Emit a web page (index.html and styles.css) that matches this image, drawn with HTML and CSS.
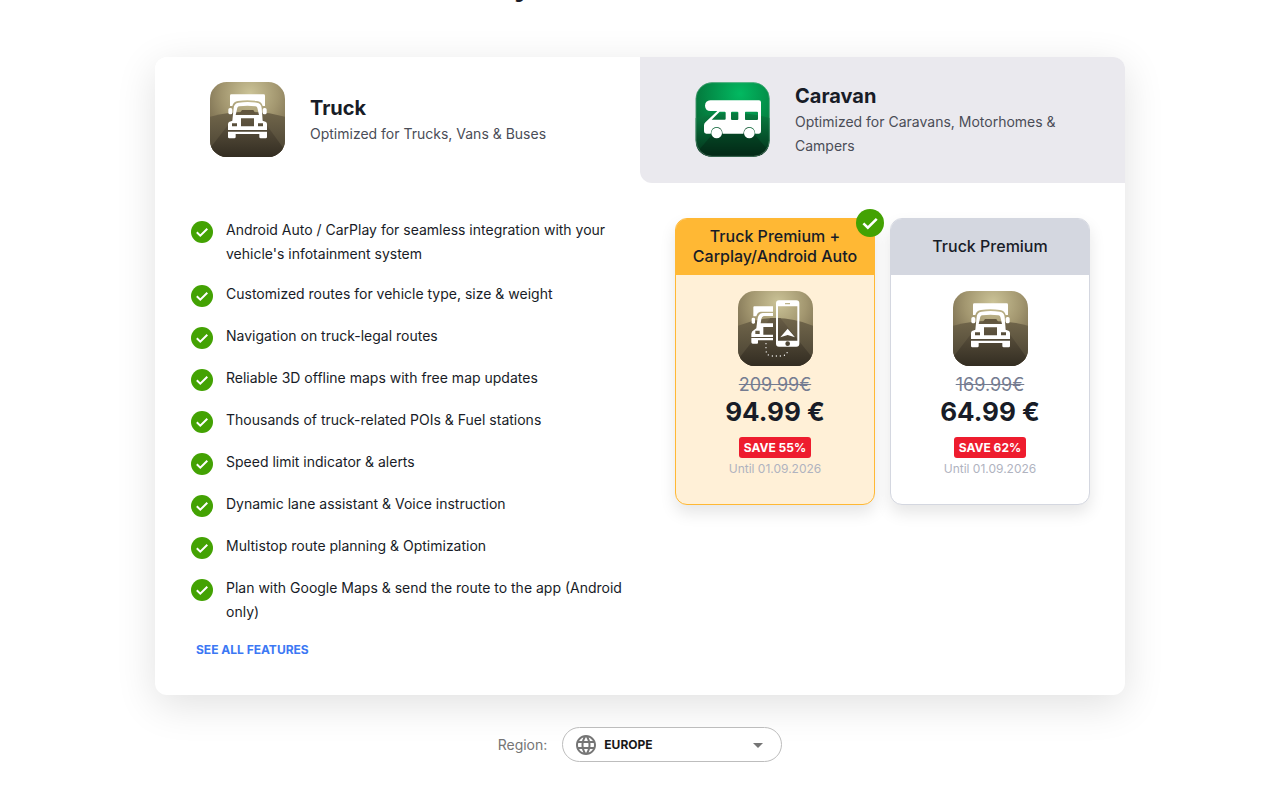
FILE: index.html
```
<!DOCTYPE html>
<html lang="en">
<head>
    <meta charset="UTF-8">
    <meta name="viewport" content="width=device-width, initial-scale=1">
    <title>Truck &amp; Caravan licenses</title>
    <link rel="stylesheet" href="styles.css">
</head>
<body>

    <!-- shared icons -->
    <svg class="sprite" aria-hidden="true">
        <defs>
            <radialGradient id="gold" gradientUnits="userSpaceOnUse" cx="150" cy="65" r="190">
                <stop offset="0" stop-color="#cbc397"/>
                <stop offset="0.45" stop-color="#a2966f"/>
                <stop offset="1" stop-color="#5f523b"/>
            </radialGradient>
            <linearGradient id="goldGround" x1="0" y1="0" x2="0" y2="1">
                <stop offset="0" stop-color="#71664b"/>
                <stop offset="1" stop-color="#474031"/>
            </linearGradient>
            <linearGradient id="goldRoad" x1="0" y1="0" x2="0" y2="1">
                <stop offset="0" stop-color="#675c45"/>
                <stop offset="1" stop-color="#332d22"/>
            </linearGradient>
            <radialGradient id="green" gradientUnits="userSpaceOnUse" cx="165" cy="65" r="150">
                <stop offset="0" stop-color="#02b961"/>
                <stop offset="1" stop-color="#047138"/>
            </radialGradient>
            <linearGradient id="greenGround" x1="0" y1="0" x2="0" y2="1">
                <stop offset="0" stop-color="#087e41"/>
                <stop offset="1" stop-color="#03301a"/>
            </linearGradient>
            <clipPath id="tile">
                <rect x="30" y="30" width="225" height="225" rx="50"/>
            </clipPath>
        </defs>
        <symbol id="check" viewBox="0 0 22 22">
            <circle cx="11" cy="11" r="11" fill="#43a203"/>
            <path d="M5.8 11.3l3.5 3.4 7-7" fill="none" stroke="#fff" stroke-width="2"/>
        </symbol>
        <symbol id="truck" viewBox="30 30 225 225">
            <g clip-path="url(#tile)">
                <rect x="30" y="30" width="225" height="225" fill="url(#gold)"/>
                <path d="M30 134q112-30 225 0v121H30z" fill="url(#goldGround)"/>
                <path d="M112 123h62l78 108v24H30v-26z" fill="url(#goldRoad)"/>
            </g>
            <path d="M94 67h97a4 4 0 0 1 4 4v31h-7c-2-9-8-14-17-15q-29-4-57 0c-9 1-15 6-17 15h-7V71a4 4 0 0 1 4-4z" fill="#fff"/>
            <path fill-rule="evenodd" d="M116 92q27-4 54 0c10 1 14 7 15 16l3 38 10 4q3 2 3 7v17H84v-17q0-5 3-7l10-4 4-38c1-9 5-15 15-16zM118 103c-5 1-6 4-7 9l-4 17h70l-4-17c-1-5-2-8-7-9q-24-4-48 0zM123 139v24h39v-24zM96 154v9h15v-9zM174 154v9h15v-9z" fill="#fff"/>
            <path d="M126 114h34l7 11h-49z" fill="#62563e"/>
            <path d="M84 179h117v16q0 4-4 4h-15q-4 0-4-4v-9h-71v9q0 4-4 4H88q-4 0-4-4z" fill="#fff"/>
            <rect x="85" y="108" width="12" height="19" rx="5" fill="#fff"/>
            <rect x="188" y="108" width="12" height="19" rx="5" fill="#fff"/>
        </symbol>
        <symbol id="truck-phone" viewBox="30 30 225 225">
            <g clip-path="url(#tile)">
                <rect x="30" y="30" width="225" height="225" fill="url(#gold)"/>
                <path d="M30 134q112-46 225 0v121H30z" fill="url(#goldGround)"/>
                <path d="M127 111h30l93 115v29H36v-27z" fill="url(#goldRoad)"/>
            </g>
            <path d="M79 76h56v16H98q-10 1-13 14h-9V79q0-3 3-3z" fill="#fff"/>
            <path fill-rule="evenodd" d="M104 96h31v9h-25q-9 0-10 9l-2 13h37v11h-29v23h29v7H70v-10q0-8 9-12l6-4 3-25q2-20 16-21zM82 149v10h13v-10z" fill="#fff"/>
            <path d="M70 171h65v7H90v7q0 3-3 3H74q-4 0-4-4z" fill="#fff"/>
            <rect x="71" y="110" width="10" height="18" rx="4" fill="#fff"/>
            <path fill-rule="evenodd" d="M153 58h52q9 0 9 9v121q0 9-9 9h-52q-9 0-9-9V67q0-9 9-9zM150 76v103h58V76zM171 66v4h15v-4zM172 188a7 7 0 1 0 14 0 7 7 0 1 0-14 0z" fill="#fff"/>
            <path d="M179 143l22 26-22-7-22 7z" fill="#fff"/>
            <path d="M114 188v18q0 18 18 19h28q17-1 20-18" fill="none" stroke="#fff" stroke-width="4" stroke-linecap="round" stroke-dasharray="0 12"/>
        </symbol>
        <symbol id="caravan" viewBox="30 30 225 225">
            <g clip-path="url(#tile)">
                <rect x="32" y="31" width="222" height="223" rx="50" fill="url(#green)"/>
                <path d="M32 138q110-32 222 0v66q0 50-50 50H82q-50 0-50-50z" fill="url(#greenGround)"/>
                <path d="M40 236l74-87h62l72 84q-12 21-44 21H82q-30 0-42-18z" fill="#02180c" opacity="0.3"/>
            </g>
            <rect x="33" y="32" width="220" height="221" rx="48" fill="none" stroke="#8fb9a4" stroke-width="2" opacity="0.6"/>
            <path fill-rule="evenodd" d="M76 85h146q6 0 6 6v87q0 7-6 7h-11q-2-19-18-20-16 1-18 20h-62q-2-19-18-20-16 1-18 20H64q-7 0-7-7v-18q0-6 5-10l35-33H76q-15 0-16-16 1-15 16-16zM104 119l-24 24h39q3 0 3-3v-18q0-3-3-3zM141 119q-3 0-3 3v18q0 4 3 4h16q3 0 3-4v-18q0-3-3-3zM182 119q-2 0-2 3v18q0 4 2 4h34q3 0 3-4v-18q0-3-3-3z" fill="#fff"/>
            <circle cx="95" cy="183" r="16" fill="#fff"/>
            <circle cx="193" cy="183" r="16" fill="#fff"/>
        </symbol>
        <symbol id="globe" viewBox="0 0 24 24">
            <path fill="#757575" d="M11.99 2C6.47 2 2 6.48 2 12s4.47 10 9.99 10C17.52 22 22 17.52 22 12S17.52 2 11.99 2zm6.93 6h-2.95c-.32-1.25-.78-2.45-1.38-3.56 1.84.63 3.37 1.91 4.33 3.56zM12 4.04c.83 1.2 1.48 2.53 1.91 3.96h-3.82c.43-1.43 1.08-2.76 1.91-3.96zM4.26 14C4.1 13.36 4 12.69 4 12s.1-1.36.26-2h3.38c-.08.66-.14 1.32-.14 2s.06 1.34.14 2H4.26zm.82 2h2.95c.32 1.25.78 2.45 1.38 3.56-1.84-.63-3.37-1.9-4.33-3.56zm2.95-8H5.08c.96-1.66 2.49-2.93 4.33-3.56C8.81 5.55 8.35 6.75 8.03 8zM12 19.96c-.83-1.2-1.48-2.53-1.91-3.96h3.82c-.43 1.43-1.08 2.76-1.91 3.96zM14.34 14H9.66c-.09-.66-.16-1.32-.16-2s.07-1.35.16-2h4.68c.09.65.16 1.32.16 2s-.07 1.34-.16 2zm.25 5.56c.6-1.11 1.06-2.31 1.38-3.56h2.95c-.96 1.65-2.49 2.93-4.33 3.56zM16.36 14c.08-.66.14-1.32.14-2s-.06-1.34-.14-2h3.38c.16.64.26 1.31.26 2s-.1 1.36-.26 2h-3.38z"/>
        </symbol>
    </svg>

    <main class="page">
        <h1 class="heading">y</h1>

        <section class="card">
            <div class="tabs">
                <button type="button" class="tab tab-active">
                    <svg class="app-icon"><use href="#truck"/></svg>
                    <span class="tab-text">
                        <span class="tab-title">Truck</span>
                        <span class="tab-sub">Optimized for Trucks, Vans &amp; Buses</span>
                    </span>
                </button>
                <button type="button" class="tab">
                    <svg class="app-icon"><use href="#caravan"/></svg>
                    <span class="tab-text">
                        <span class="tab-title">Caravan</span>
                        <span class="tab-sub">Optimized for Caravans, Motorhomes &amp; Campers</span>
                    </span>
                </button>
            </div>

            <div class="content">
                <div class="features">
                    <ul class="feature-list">
                        <li><svg class="check"><use href="#check"/></svg><span>Android Auto / CarPlay for seamless integration with your vehicle's infotainment system</span></li>
                        <li><svg class="check"><use href="#check"/></svg><span>Customized routes for vehicle type, size &amp; weight</span></li>
                        <li><svg class="check"><use href="#check"/></svg><span>Navigation on truck-legal routes</span></li>
                        <li><svg class="check"><use href="#check"/></svg><span>Reliable 3D offline maps with free map updates</span></li>
                        <li><svg class="check"><use href="#check"/></svg><span>Thousands of truck-related POIs &amp; Fuel stations</span></li>
                        <li><svg class="check"><use href="#check"/></svg><span>Speed limit indicator &amp; alerts</span></li>
                        <li><svg class="check"><use href="#check"/></svg><span>Dynamic lane assistant &amp; Voice instruction</span></li>
                        <li><svg class="check"><use href="#check"/></svg><span>Multistop route planning &amp; Optimization</span></li>
                        <li><svg class="check"><use href="#check"/></svg><span>Plan with Google Maps &amp; send the route to the app (Android only)</span></li>
                    </ul>
                    <a href="#" class="see-all">SEE ALL FEATURES</a>
                </div>

                <div class="plans">
                    <button type="button" class="plan plan-selected">
                        <svg class="plan-check"><use href="#check"/></svg>
                        <span class="plan-head">Truck Premium + Carplay/Android Auto</span>
                        <span class="plan-body">
                            <svg class="app-icon"><use href="#truck-phone"/></svg>
                            <s class="old-price">209.99€</s>
                            <strong class="price">94.99 €</strong>
                            <span class="save">SAVE 55%</span>
                            <span class="until">Until 01.09.2026</span>
                        </span>
                    </button>
                    <button type="button" class="plan">
                        <span class="plan-head">Truck Premium</span>
                        <span class="plan-body">
                            <svg class="app-icon"><use href="#truck"/></svg>
                            <s class="old-price">169.99€</s>
                            <strong class="price">64.99 €</strong>
                            <span class="save">SAVE 62%</span>
                            <span class="until">Until 01.09.2026</span>
                        </span>
                    </button>
                </div>
            </div>
        </section>

        <div class="region">
            <label for="region">Region:</label>
            <div class="select-wrap">
                <select id="region">
                    <option>EUROPE</option>
                </select>
                <svg class="globe"><use href="#globe"/></svg>
                <svg class="arrow" viewBox="0 0 10 5"><path d="M0 0h10L5 5z" fill="#757575"/></svg>
            </div>
        </div>
    </main>

</body>
</html>
```
FILE: styles.css
```
* {
    box-sizing: border-box;
}

body {
    margin: 0;
    font-family: Inter, "Liberation Sans", sans-serif;
    font-size: 14px;
    line-height: 24px;
    color: #181c27;
    background: #fff;
}

button {
    font: inherit;
    color: inherit;
    cursor: pointer;
}

.sprite {
    position: absolute;
    width: 0;
    height: 0;
}

.page {
    display: flow-root;
    max-width: 970px;
    margin: 0 auto;
    padding-bottom: 32px;
}

.heading {
    margin: -28px 0 57px;
    padding-left: 359px;
    font-size: 28px;
    font-weight: 700;
    line-height: 28px;
}

.card {
    border-radius: 12px;
    background: #fff;
    box-shadow: 0 10px 40px rgba(0, 0, 0, 0.12);
}

/* vehicle tabs */
.tabs {
    display: grid;
    grid-template-columns: 1fr 1fr;
}

.tab {
    display: flex;
    align-items: center;
    gap: 25px;
    padding: 25px 55px;
    border: 0;
    border-radius: 0 12px 0 12px;
    background: #eae9ee;
    text-align: left;
}

.tab-active {
    border-radius: 12px 0 0 0;
    background: #fff;
}

.app-icon {
    flex: none;
    display: block;
    width: 75px;
    height: 75px;
}

.tab .app-icon {
    align-self: flex-start;
}

.tab-title {
    display: block;
    font-size: 20px;
    font-weight: 700;
    line-height: 28px;
}

.tab-sub {
    display: block;
    color: #4a4d57;
}

/* features + plans */
.content {
    display: grid;
    grid-template-columns: 1fr 415px;
    gap: 35px;
    padding: 35px 35px 34px;
}

.feature-list {
    display: flex;
    flex-direction: column;
    gap: 16px;
    margin: 0;
    padding: 0;
    list-style: none;
}

.feature-list li {
    display: flex;
    gap: 13px;
    min-height: 26px;
    padding-left: 1px;
}

.check {
    flex: none;
    width: 22px;
    height: 22px;
    margin-top: 3px;
}

.see-all {
    display: inline-block;
    margin-top: 16px;
    padding: 0 6px;
    color: #3c78f4;
    font-size: 12px;
    font-weight: 700;
    line-height: 20px;
    text-decoration: none;
}

.plans {
    display: grid;
    grid-template-columns: 1fr 1fr;
    align-items: start;
    gap: 15px;
}

.plan {
    position: relative;
    display: block;
    padding: 0;
    border: 1px solid #d4d7e0;
    border-radius: 12px;
    background: #fff;
    box-shadow: 0 8px 16px rgba(0, 0, 0, 0.1);
    text-align: center;
}

.plan-selected {
    border-color: #ffb834;
    background: #fff0d7;
}

.plan-head {
    display: flex;
    align-items: center;
    justify-content: center;
    height: 56px;
    padding: 0 10px 2px;
    border-radius: 11px 11px 0 0;
    background: #d4d7e0;
    font-size: 16px;
    font-weight: 500;
    line-height: 20px;
}

.plan-selected .plan-head {
    background: #ffb834;
}

.plan-check {
    position: absolute;
    top: -10px;
    right: -10px;
    width: 28px;
    height: 28px;
}

.plan-body {
    display: flex;
    flex-direction: column;
    align-items: center;
    padding: 16px 10px 24px;
}

.old-price {
    margin-top: 7px;
    color: #757c91;
    font-size: 18px;
    line-height: 24px;
}

.price {
    font-size: 26px;
    font-weight: 700;
    line-height: 30px;
}

.save {
    margin-top: 10px;
    padding: 0 5px;
    border-radius: 3px;
    background: #ee1c2e;
    color: #fff;
    font-size: 12px;
    font-weight: 700;
    line-height: 21px;
}

.until {
    color: #b0b3bf;
    font-size: 12px;
    line-height: 22px;
}

/* region picker */
.region {
    display: flex;
    align-items: center;
    justify-content: center;
    gap: 15px;
    padding-top: 32px;
    color: #757575;
}

.select-wrap {
    position: relative;
}

.select-wrap select {
    appearance: none;
    display: block;
    width: 220px;
    height: 35px;
    padding: 0 40px 0 41px;
    border: 1px solid #bdbdbd;
    border-radius: 18px;
    background: #fff;
    color: #181818;
    font-family: inherit;
    font-size: 12px;
    font-weight: 700;
}

.globe {
    position: absolute;
    top: 6px;
    left: 12px;
    width: 24px;
    height: 24px;
    pointer-events: none;
}

.arrow {
    position: absolute;
    top: 16px;
    right: 19px;
    width: 10px;
    height: 5px;
    pointer-events: none;
}
```
